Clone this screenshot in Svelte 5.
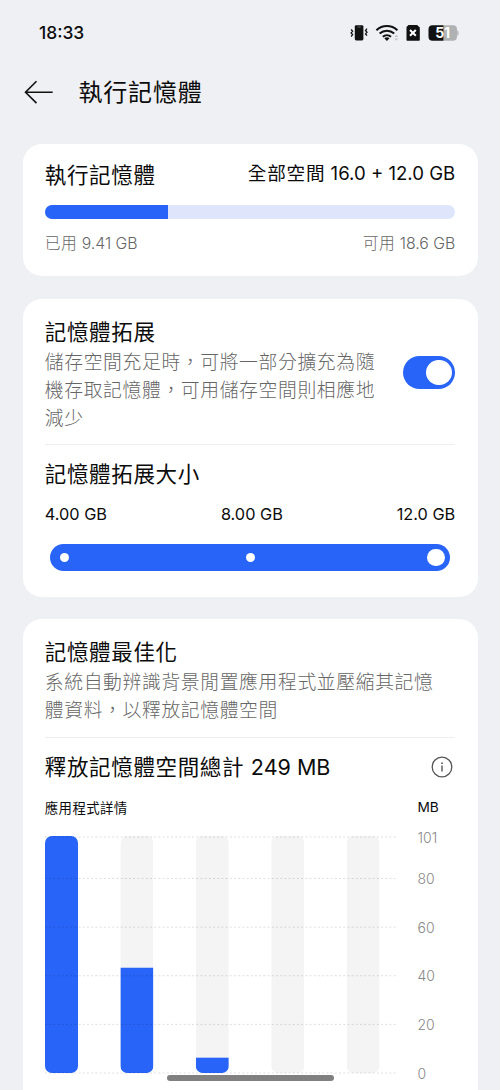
<script>
  let expansionOn = $state(true);

  const usedPercent = 29.9;
  const sizes = ['4.00 GB', '8.00 GB', '12.0 GB'];

  // chart geometry
  const base = 238;
  const perMb = 2.431;
  const max = 101;
  const bars = [101, 43.3, 6.3, 0, 0];
  const ticks = [101, 80, 60, 40, 20, 0];

  // the top value is pinned to the upper edge of the plot
  const yOf = (value) => (value === max ? 2 : base - value * perMb);
  const xOf = (i) => i * 75.4;
</script>

<div class="screen">
  <div class="status">
    <span class="time">18:33</span>
    <svg class="status-icons" width="110" height="20" viewBox="0 0 110 20">
      <rect x="4.8" y="2.2" width="8.6" height="15.2" rx="1.4" fill="#111" />
      <path d="M7.5 4h3.2" stroke="#777" stroke-width="0.8" />
      <path d="M1.1 6.5l1.5 1.7-1.5 1.7 1.5 1.7-1.5 1.9M17 5.7l-1.5 1.8 1.5 1.7-1.5 1.7 1.5 1.8" fill="none" stroke="#111" stroke-width="1.3" />
      <g fill="none" stroke="#111" stroke-width="2">
        <path d="M26.4 7.3c6-5.6 15-5.6 21 0" />
        <path d="M29.6 10.6c4.3-3.9 10.3-3.9 14.6 0" />
        <path d="M32.8 13.7c2.4-2.1 5.8-2.1 8.2 0" />
      </g>
      <path d="M34.3 15.2c1.5-1.2 3.7-1.2 5.2 0l-2.6 2.7z" fill="#111" />
      <path d="M44.3 14l2-2.3 2 2.3zM44.3 15.5l2 2.3 2-2.3z" fill="#c4c5c7" />
      <path d="M58.5 2h8.6l2.7 2.6v12.2c0 .6-.4 1-1 1H57.5c-.6 0-1-.4-1-1V4z" fill="#111" />
      <path d="M60 7l5.8 5.8M65.8 7L60 12.8" stroke="#fff" stroke-width="2" />
      <path d="M93.5 2.3H103a4 4 0 0 1 4 4v7.4a4 4 0 0 1-4 4h-9.5z" fill="#b0b1b2" />
      <path d="M93.5 2.3h-11a4 4 0 0 0-4 4v7.4a4 4 0 0 0 4 4h11z" fill="#111" />
      <path d="M107.3 7.2c1.8.8 1.8 4.8 0 5.6z" fill="#b0b1b2" />
      <text x="85.3" y="15" class="battery">51</text>
    </svg>
  </div>

  <header>
    <svg width="30" height="26" viewBox="0 0 30 26">
      <path d="M12.5 1.3L1.5 12.2l11 10.9M1.5 12.2h27.2" fill="none" stroke="#111" stroke-width="1.6" />
    </svg>
    <h1>執行記憶體</h1>
  </header>

  <section class="card ram">
    <div class="row ram-head">
      <h2>執行記憶體</h2>
      <span class="total"><span class="zh">全部空間</span> 16.0 + 12.0 GB</span>
    </div>
    <div class="meter">
      <div class="meter-used" style="width: {usedPercent}%"></div>
    </div>
    <div class="row legend">
      <span><span class="zh">已用</span> 9.41 GB</span>
      <span><span class="zh">可用</span> 18.6 GB</span>
    </div>
  </section>

  <section class="card expansion">
    <div class="row toggle-row">
      <div>
        <h2>記憶體拓展</h2>
        <p>儲存空間充足時，可將一部分擴充為隨<br />機存取記憶體，可用儲存空間則相應地<br />減少</p>
      </div>
      <button class="switch" class:on={expansionOn} aria-label="記憶體拓展" onclick={() => (expansionOn = !expansionOn)}>
        <span class="knob"></span>
      </button>
    </div>
    <hr />
    <h2 class="size-title">記憶體拓展大小</h2>
    <div class="row sizes">
      {#each sizes as size}
        <span>{size}</span>
      {/each}
    </div>
    <div class="slider">
      <span class="stop"></span>
      <span class="stop"></span>
      <span class="thumb"></span>
    </div>
  </section>

  <section class="card optimise">
    <h2>記憶體最佳化</h2>
    <p>系統自動辨識背景閒置應用程式並壓縮其記憶<br />體資料，以釋放記憶體空間</p>
    <hr />
    <div class="row freed">
      <h2>釋放記憶體空間總計 <span class="latin">249 MB</span></h2>
      <svg width="22" height="22" viewBox="0 0 22 22">
        <circle cx="11" cy="11" r="9.8" fill="none" stroke="#555" stroke-width="1.3" />
        <circle cx="11" cy="7.2" r="0.9" fill="#555" />
        <path d="M11 9.6v6" fill="none" stroke="#555" stroke-width="1.4" />
      </svg>
    </div>
    <div class="row chart-head">
      <span class="zh">應用程式詳情</span>
      <span class="unit">MB</span>
    </div>
    <svg class="chart" width="410" height="250" viewBox="0 0 410 250">
      <defs>
        <clipPath id="tracks">
          {#each bars as _, i}
            <rect x={xOf(i)} y="1" width="33" height="237" rx="7" />
          {/each}
        </clipPath>
      </defs>
      <g clip-path="url(#tracks)">
        {#each bars as value, i}
          <rect x={xOf(i)} y="0" width="33" height="238" fill="#f4f4f4" />
          {#if value}
            <rect x={xOf(i)} y={value === max ? 0 : yOf(value)} width="33" height="238" fill="#2864f7" />
          {/if}
        {/each}
      </g>
      {#each ticks as tick}
        <line x1="0" x2="353" y1={yOf(tick)} y2={yOf(tick)} class="grid" />
        <text x="372.5" y={yOf(tick) + 5.6} class="tick">{tick}</text>
      {/each}
    </svg>
  </section>

  <div class="home-bar"></div>
</div>

<style>
  :global(body) {
    background: #eff0f3;
  }

  .screen {
    position: relative;
    box-sizing: border-box;
    width: 500px;
    height: 1090px;
    padding: 0 22.5px;
    overflow: hidden;
    background: #eff0f3;
    color: #0c0c0c;
    font-family: Inter, "Noto Sans CJK TC", sans-serif;
  }

  svg {
    display: block;
    flex: none;
  }

  h1,
  h2,
  p {
    margin: 0;
    white-space: nowrap;
  }

  h1 {
    font-size: 24px;
    font-weight: 400;
    letter-spacing: 0.8px;
    line-height: 34px;
  }

  h2 {
    font-size: 21.5px;
    font-weight: 400;
    letter-spacing: 0.65px;
    line-height: 30px;
  }

  p {
    color: #666;
    font-size: 18.8px;
    font-weight: 300;
    letter-spacing: 0.65px;
    line-height: 28px;
  }

  hr {
    height: 1px;
    margin: 0;
    border: 0;
    background: #eee;
  }

  .row {
    display: flex;
    align-items: center;
    justify-content: space-between;
  }

  .status {
    display: flex;
    align-items: center;
    justify-content: space-between;
    height: 65px;
    padding: 0 17.5px 0 16.5px;
  }

  .time {
    font-size: 17.4px;
    font-weight: 500;
  }

  .battery {
    fill: #fff;
    font-size: 14px;
    font-weight: 700;
    letter-spacing: -0.3px;
  }

  header {
    display: flex;
    align-items: center;
    gap: 24.5px;
    height: 55px;
    padding-left: 1.5px;
  }

  .card {
    box-sizing: border-box;
    padding: 0 22.3px;
    border-radius: 19px;
    background: #fff;
  }

  .ram {
    height: 132px;
    margin-top: 24.4px;
    padding-top: 15.3px;
  }

  .ram-head {
    height: 30px;
  }

  .total {
    font-size: 18.6px;
    line-height: 28px;
    margin-top: -3px;
  }

  .total .zh {
    letter-spacing: 0.8px;
  }

  .meter {
    height: 14px;
    margin-top: 15.5px;
    border-radius: 7px;
    background: #dfe6fc;
    overflow: hidden;
  }

  .meter-used {
    height: 100%;
    background: #2864f7;
  }

  .legend {
    margin-top: 12.4px;
    color: #666;
    font-size: 15.8px;
    font-weight: 300;
    line-height: 24px;
  }

  .legend .zh {
    letter-spacing: 0.4px;
  }

  .expansion {
    height: 298px;
    margin-top: 22.4px;
    padding-top: 18.2px;
  }

  .toggle-row {
    align-items: flex-start;
    height: 114px;
    margin-bottom: 13.1px;
  }

  .toggle-row p,
  .optimise p {
    padding-top: 1.8px;
  }

  .switch {
    display: flex;
    align-items: center;
    width: 52px;
    height: 33px;
    margin-top: 39px;
    padding: 0 3.5px;
    border: 0;
    border-radius: 17px;
    background: #ccc;
  }

  .switch.on {
    justify-content: flex-end;
    background: #2864f7;
  }

  .knob {
    width: 25.5px;
    height: 25.5px;
    border-radius: 50%;
    background: #fff;
  }

  .size-title {
    margin-top: 13.6px;
  }

  .sizes {
    margin-top: 14.5px;
    font-size: 16.3px;
    line-height: 22px;
  }

  .slider {
    display: flex;
    align-items: center;
    justify-content: space-between;
    box-sizing: border-box;
    height: 27.5px;
    margin: 18.7px 5.7px 0;
    padding: 0 5px;
    border-radius: 14px;
    background: #2864f7;
  }

  .stop {
    width: 9px;
    height: 9px;
    margin: 0 4.25px;
    border-radius: 50%;
    background: #fff;
  }

  .thumb {
    width: 17.5px;
    height: 17.5px;
    border-radius: 50%;
    background: #fff;
  }

  .optimise {
    height: 520px;
    margin-top: 22px;
    padding-top: 18.2px;
  }

  .optimise p {
    padding-top: 2.4px;
  }

  .optimise hr {
    margin-top: 11.4px;
  }

  .freed {
    height: 30px;
    margin-top: 13.8px;
    padding-right: 2.2px;
  }

  .latin {
    letter-spacing: 0;
  }

  .chart-head {
    height: 20px;
    margin-top: 15.4px;
    padding-right: 16.5px;
    font-size: 13.4px;
  }

  .chart-head .zh {
    letter-spacing: 0.4px;
  }

  .unit {
    font-size: 13.7px;
  }

  .chart {
    margin-top: 18.4px;
    overflow: visible;
  }

  .grid {
    stroke: #000;
    stroke-opacity: 0.13;
    stroke-dasharray: 2 2.2;
  }

  .tick {
    fill: #888;
    font-size: 14px;
    font-weight: 300;
  }

  .home-bar {
    position: absolute;
    bottom: 9.5px;
    left: 166.5px;
    width: 167px;
    height: 5.5px;
    border-radius: 3px;
    background: #808080;
  }
</style>
